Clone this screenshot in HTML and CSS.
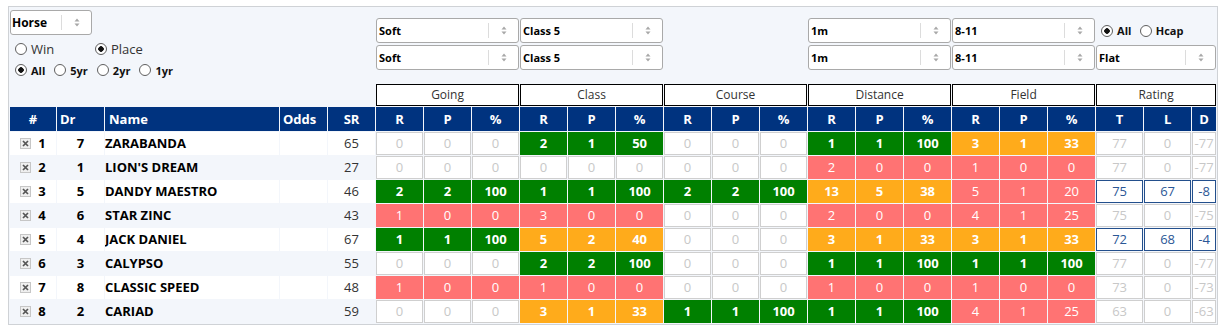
FILE: index.html
```html
<!DOCTYPE html>
<html lang="en">
<head>
  <meta charset="UTF-8">
  <title>Form Stats</title>
  <link rel="stylesheet" href="styles.css">
</head>
<body>
  <div class="panel">
    <table class="grid" id="formTable">
      <colgroup>
        <col class="c-num"><col class="c-std"><col class="c-name"><col class="c-std"><col class="c-std">
        <col class="c-std"><col class="c-std"><col class="c-std">
        <col class="c-std"><col class="c-std"><col class="c-std">
        <col class="c-std"><col class="c-std"><col class="c-std">
        <col class="c-std"><col class="c-std"><col class="c-std">
        <col class="c-std"><col class="c-std"><col class="c-std">
        <col class="c-std"><col class="c-std"><col class="c-d">
      </colgroup>
      <thead>
        <tr class="filters">
          <td class="controls" colspan="5" rowspan="3">
            <div class="select select-horse">
              <span class="value">Horse</span><span class="sep"></span>
              <span class="arrows"><svg width="6" height="9" viewBox="0 0 6 9"><path d="M3 0.5 L5.5 3.5 H0.5 Z M3 8.5 L5.5 5.5 H0.5 Z" fill="#a8a8a8"/></svg></span>
            </div>
            <div class="radio-row big">
              <label class="wide"><input type="radio" name="bet"> Win</label>
              <label><input type="radio" name="bet" checked> Place</label>
            </div>
            <div class="radio-row">
              <label><input type="radio" name="period" checked> All</label>
              <label><input type="radio" name="period"> 5yr</label>
              <label><input type="radio" name="period"> 2yr</label>
              <label><input type="radio" name="period"> 1yr</label>
            </div>
          </td>
          <td colspan="3"><div class="select"><span class="value">Soft</span><span class="sep"></span><span class="arrows"><svg width="6" height="9" viewBox="0 0 6 9"><path d="M3 0.5 L5.5 3.5 H0.5 Z M3 8.5 L5.5 5.5 H0.5 Z" fill="#a8a8a8"/></svg></span></div></td>
          <td colspan="3"><div class="select"><span class="value">Class 5</span><span class="sep"></span><span class="arrows"><svg width="6" height="9" viewBox="0 0 6 9"><path d="M3 0.5 L5.5 3.5 H0.5 Z M3 8.5 L5.5 5.5 H0.5 Z" fill="#a8a8a8"/></svg></span></div></td>
          <td colspan="3"></td>
          <td colspan="3"><div class="select"><span class="value">1m</span><span class="sep"></span><span class="arrows"><svg width="6" height="9" viewBox="0 0 6 9"><path d="M3 0.5 L5.5 3.5 H0.5 Z M3 8.5 L5.5 5.5 H0.5 Z" fill="#a8a8a8"/></svg></span></div></td>
          <td colspan="3"><div class="select"><span class="value">8-11</span><span class="sep"></span><span class="arrows"><svg width="6" height="9" viewBox="0 0 6 9"><path d="M3 0.5 L5.5 3.5 H0.5 Z M3 8.5 L5.5 5.5 H0.5 Z" fill="#a8a8a8"/></svg></span></div></td>
          <td colspan="3" class="race-type">
            <label><input type="radio" name="race" checked> All</label>
            <label><input type="radio" name="race"> Hcap</label>
          </td>
        </tr>
        <tr class="filters second">
          <td colspan="3"><div class="select"><span class="value">Soft</span><span class="sep"></span><span class="arrows"><svg width="6" height="9" viewBox="0 0 6 9"><path d="M3 0.5 L5.5 3.5 H0.5 Z M3 8.5 L5.5 5.5 H0.5 Z" fill="#a8a8a8"/></svg></span></div></td>
          <td colspan="3"><div class="select"><span class="value">Class 5</span><span class="sep"></span><span class="arrows"><svg width="6" height="9" viewBox="0 0 6 9"><path d="M3 0.5 L5.5 3.5 H0.5 Z M3 8.5 L5.5 5.5 H0.5 Z" fill="#a8a8a8"/></svg></span></div></td>
          <td colspan="3"></td>
          <td colspan="3"><div class="select"><span class="value">1m</span><span class="sep"></span><span class="arrows"><svg width="6" height="9" viewBox="0 0 6 9"><path d="M3 0.5 L5.5 3.5 H0.5 Z M3 8.5 L5.5 5.5 H0.5 Z" fill="#a8a8a8"/></svg></span></div></td>
          <td colspan="3"><div class="select"><span class="value">8-11</span><span class="sep"></span><span class="arrows"><svg width="6" height="9" viewBox="0 0 6 9"><path d="M3 0.5 L5.5 3.5 H0.5 Z M3 8.5 L5.5 5.5 H0.5 Z" fill="#a8a8a8"/></svg></span></div></td>
          <td colspan="3"><div class="select"><span class="value">Flat</span><span class="sep"></span><span class="arrows"><svg width="6" height="9" viewBox="0 0 6 9"><path d="M3 0.5 L5.5 3.5 H0.5 Z M3 8.5 L5.5 5.5 H0.5 Z" fill="#a8a8a8"/></svg></span></div></td>
        </tr>
        <tr class="groups">
          <th colspan="3">Going</th>
          <th colspan="3">Class</th>
          <th colspan="3">Course</th>
          <th colspan="3">Distance</th>
          <th colspan="3">Field</th>
          <th colspan="3">Rating</th>
        </tr>
        <tr class="heads">
          <th>#</th>
          <th class="left">Dr</th>
          <th class="left name">Name</th>
          <th class="left">Odds</th>
          <th>SR</th>
          <th>R</th><th>P</th><th>%</th>
          <th>R</th><th>P</th><th>%</th>
          <th>R</th><th>P</th><th>%</th>
          <th>R</th><th>P</th><th>%</th>
          <th>R</th><th>P</th><th>%</th>
          <th>T</th><th>L</th><th>D</th>
        </tr>
      </thead>
      <tbody>
        <!-- filas generadas abajo -->
      </tbody>
    </table>
  </div>

  <script>
    const runners = [
      { no: 1, dr: 7, name: 'ZARABANDA', sr: 65, stats: [[0,0,0],[2,1,50],[0,0,0],[1,1,100],[3,1,33]], rating: [77,0,-77], rated: false },
      { no: 2, dr: 1, name: "LION'S DREAM", sr: 27, stats: [[0,0,0],[0,0,0],[0,0,0],[2,0,0],[1,0,0]], rating: [77,0,-77], rated: false },
      { no: 3, dr: 5, name: 'DANDY MAESTRO', sr: 46, stats: [[2,2,100],[1,1,100],[2,2,100],[13,5,38],[5,1,20]], rating: [75,67,-8], rated: true },
      { no: 4, dr: 6, name: 'STAR ZINC', sr: 43, stats: [[1,0,0],[3,0,0],[0,0,0],[2,0,0],[4,1,25]], rating: [75,0,-75], rated: false },
      { no: 5, dr: 4, name: 'JACK DANIEL', sr: 67, stats: [[1,1,100],[5,2,40],[0,0,0],[3,1,33],[3,1,33]], rating: [72,68,-4], rated: true },
      { no: 6, dr: 3, name: 'CALYPSO', sr: 55, stats: [[0,0,0],[2,2,100],[0,0,0],[1,1,100],[1,1,100]], rating: [77,0,-77], rated: false },
      { no: 7, dr: 8, name: 'CLASSIC SPEED', sr: 48, stats: [[1,0,0],[1,0,0],[0,0,0],[1,0,0],[1,0,0]], rating: [73,0,-73], rated: false },
      { no: 8, dr: 2, name: 'CARIAD', sr: 59, stats: [[0,0,0],[3,1,33],[1,1,100],[1,1,100],[4,1,25]], rating: [63,0,-63], rated: false }
    ];

    // colour of a stat block from runs and strike rate
    function statClass(s) {
      if (!s[0]) return 'zero';
      if (s[2] >= 50) return 'good';
      if (s[2] >= 30) return 'fair';
      return 'poor';
    }

    const cross = '<span class="remove"><svg width="9" height="9" viewBox="0 0 9 9"><path d="M2 2 L7 7 M7 2 L2 7" stroke="#555" stroke-width="1.7"/></svg></span>';
    const tbody = document.querySelector('#formTable tbody');

    runners.forEach(r => {
      const row = document.createElement('tr');
      let html = `
        <td class="num">${cross}${r.no}</td>
        <td class="dr">${r.dr}</td>
        <td class="horse">${r.name}</td>
        <td></td>
        <td class="sr">${r.sr}</td>`;
      r.stats.forEach(s => {
        const c = statClass(s);
        s.forEach(v => { html += `<td class="stat ${c}">${v}</td>`; });
      });
      r.rating.forEach(v => {
        html += `<td class="stat rating${r.rated ? ' rated' : ''}">${v}</td>`;
      });
      row.innerHTML = html;
      tbody.appendChild(row);
    });
  </script>
</body>
</html>
```

FILE: styles.css
```css
body {
  margin: 6px 8px;
  font-family: "Open Sans", "Liberation Sans", sans-serif;
  font-size: 13px;
  color: #333;
  background: #fff;
}

.panel {
  width: 1208px;
  border: 1px solid #cfd2d6;
  background: #f3f6fb;
}

.grid {
  width: 1208px;
  table-layout: fixed;
  border-collapse: separate;
  border-spacing: 1px;
}

.grid td,
.grid th {
  padding: 0;
}

.c-num { width: 46px; }
.c-std { width: 47px; }
.c-name { width: 174px; }
.c-d { width: 24px; }

/* filtros */

.filters td {
  padding-top: 10px;
  vertical-align: top;
}

.filters.second td {
  padding: 1px 0 13px;
}

.filters td.controls {
  padding-top: 2px;
}

.select {
  display: flex;
  align-items: center;
  height: 25px;
  box-sizing: border-box;
  border: 1px solid #a9a9a9;
  border-radius: 3px;
  background: #fff;
  padding-left: 2px;
  font-size: 11px;
  font-weight: bold;
  color: #000;
}

.select .value {
  flex: 1;
  white-space: nowrap;
}

.select .sep {
  width: 1px;
  height: 15px;
  background: #dcdcdc;
}

.select .arrows {
  width: 29px;
  display: flex;
  justify-content: center;
}

.select-horse {
  width: 82px;
  font-size: 12px;
  padding-left: 1px;
}

.radio-row {
  display: flex;
  align-items: center;
  height: 20px;
  font-size: 11px;
  font-weight: bold;
  color: #111;
}

.radio-row.big {
  margin-top: 3px;
  height: 22px;
  font-size: 13px;
  font-weight: normal;
  color: #333;
}

.radio-row label {
  display: flex;
  align-items: center;
  margin-right: 4px;
}

.radio-row label.wide {
  width: 80px;
  margin-right: 0;
}

.race-type label {
  display: inline-flex;
  align-items: center;
  height: 25px;
  font-size: 11px;
  font-weight: bold;
  color: #111;
}

input[type="radio"] {
  appearance: none;
  -webkit-appearance: none;
  width: 12px;
  height: 12px;
  margin: 0 4px 0 5px;
  border: 1px solid #5f5f5f;
  border-radius: 50%;
  background: #fff;
  box-sizing: border-box;
}

input[type="radio"]:checked {
  background: radial-gradient(circle, #111 0 2.5px, #fff 3px);
}

/* cabeceras */

.groups th {
  height: 22px;
  box-sizing: border-box;
  border: 1px solid #000;
  background: #fff;
  font-size: 12px;
  font-weight: normal;
  line-height: 20px;
  color: #333;
}

.heads th {
  height: 24px;
  background: #00337f;
  color: #fff;
  font-size: 13px;
  font-weight: bold;
  line-height: 24px;
  text-align: center;
}

.heads th.left {
  text-align: left;
  padding-left: 3px;
}

.heads th.name {
  padding-left: 4px;
}

/* filas */

tbody td {
  height: 23px;
  box-sizing: border-box;
  border: 1px solid transparent;
  line-height: 21px;
  text-align: center;
  white-space: nowrap;
  overflow: hidden;
  background: #fff;
}

tbody tr:nth-child(even) td {
  background: #f3f6fb;
}

td.num,
td.dr,
td.horse {
  font-weight: bold;
  color: #000;
}

td.horse {
  text-align: left;
  border-left: 0;
}

td.sr {
  color: #333;
}

.remove {
  display: inline-block;
  width: 11px;
  height: 11px;
  box-sizing: border-box;
  border: 1px solid #c6c6c6;
  background: #efefef;
  margin-right: 7px;
  vertical-align: -1px;
  line-height: 0;
}

.remove svg {
  display: block;
}

tbody tr td.stat {
  background: #fff;
}

tbody tr td.zero,
tbody tr td.rating {
  border-color: #cfcfcf;
  color: #c8c8c8;
}

tbody tr td.good {
  background: #008000;
  border-color: #008000;
  color: #fff;
  font-weight: bold;
}

tbody tr td.fair {
  background: #ffab1b;
  border-color: #ffab1b;
  color: #fff;
  font-weight: bold;
}

tbody tr td.poor {
  background: #ff7373;
  border-color: #ff7373;
  color: #fff;
}

tbody tr td.rating.rated {
  border-color: #234f8c;
  color: #2b5796;
}
```
